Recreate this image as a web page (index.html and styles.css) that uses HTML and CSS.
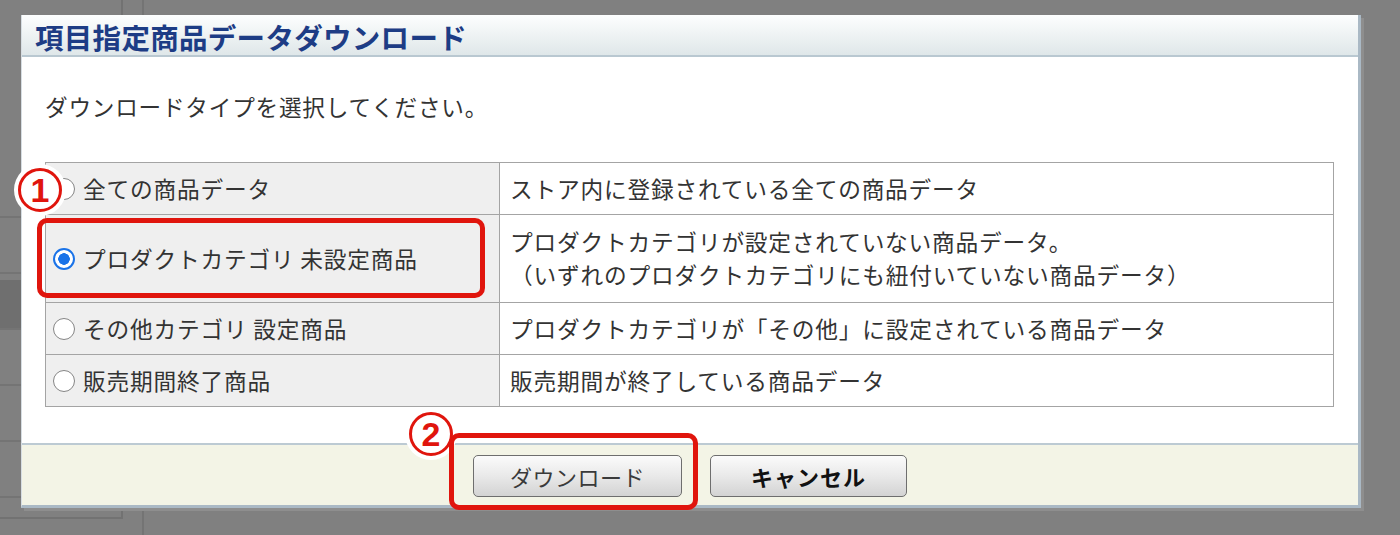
FILE: index.html
```html
<!DOCTYPE html>
<html lang="ja">

<head>
    <meta charset="UTF-8">
    <title>項目指定商品データダウンロード</title>
    <link rel="stylesheet" href="styles.css">
</head>

<body>

    <!-- page behind the modal -->
    <div class="backdrop">
        <div class="side">
            <div class="side-row"></div>
            <div class="side-row"></div>
            <div class="side-row dark"></div>
            <div class="side-row"></div>
            <div class="side-row"></div>
            <div class="side-row"></div>
        </div>
        <div class="side-gap"></div>
    </div>

    <div class="dialog">
        <div class="dialog-head">
            <h2>項目指定商品データダウンロード</h2>
        </div>

        <div class="dialog-body">
            <p class="lead">ダウンロードタイプを選択してください。</p>

            <table class="type-table">
                <tr>
                    <th><label><input type="radio" name="dlType"> 全ての商品データ</label></th>
                    <td>ストア内に登録されている全ての商品データ</td>
                </tr>
                <tr>
                    <th><label><input type="radio" name="dlType" checked> プロダクトカテゴリ 未設定商品</label></th>
                    <td>プロダクトカテゴリが設定されていない商品データ。<br>（いずれのプロダクトカテゴリにも紐付いていない商品データ）</td>
                </tr>
                <tr>
                    <th><label><input type="radio" name="dlType"> その他カテゴリ 設定商品</label></th>
                    <td>プロダクトカテゴリが「その他」に設定されている商品データ</td>
                </tr>
                <tr>
                    <th><label><input type="radio" name="dlType"> 販売期間終了商品</label></th>
                    <td>販売期間が終了している商品データ</td>
                </tr>
            </table>
        </div>

        <div class="dialog-foot">
            <button class="btn btn-download">ダウンロード</button>
            <button class="btn btn-cancel">キャンセル</button>
        </div>
    </div>

    <!-- red annotations drawn over the screenshot -->
    <span class="mark-num num-1">1</span>
    <span class="mark-box box-1"></span>
    <span class="mark-num num-2">2</span>
    <span class="mark-box box-2"></span>

</body>

</html>
```

FILE: styles.css
```css
body {
    margin: 0;
    background: #808080;
    font-family: "Noto Sans CJK JP", "Noto Sans", sans-serif;
    color: #333;
    width: 1400px;
    height: 535px;
    overflow: hidden;
    position: relative;
}

/* Backdrop */
.backdrop {
    display: flex;
    height: 535px;
}

.side {
    width: 123px;
    padding-top: 168px;
    box-sizing: border-box;
    border-right: 2px solid #727272;
    height: 519px;
    border-bottom: 2px solid #727272;
}

.side-row {
    height: 50px;
    border-bottom: 2px solid #747474;
    box-sizing: border-box;
    margin-bottom: 6px;
}

.side-row.dark {
    background: #6f6f6f;
}

.side-gap {
    width: 19px;
    border-right: 2px solid #747474;
}

/* Dialog */
.dialog {
    position: absolute;
    left: 21px;
    top: 15px;
    width: 1336px;
    background: white;
    border-left: 1px solid #d6dde2;
    border-right: 3px solid #aab9c5;
    border-bottom: 3px solid #aab9c5;
    box-shadow: 3px 3px 0 #8e8e8e;
}

.dialog-head {
    height: 40px;
    background: linear-gradient(#fdfefe, #dfe7e9);
    border-bottom: 2px solid #b9c8d1;
    padding-left: 13px;
}

.dialog-head h2 {
    margin: 0;
    font-size: 28.5px;
    line-height: 44px;
    font-weight: 700;
    color: #1d3c85;
    letter-spacing: 0.3px;
}

.dialog-body {
    padding: 33px 24px 36px 23px;
}

.lead {
    margin: 0 0 38px;
    font-size: 22.6px;
    line-height: 34px;
    letter-spacing: 0.8px;
}

.type-table {
    width: 100%;
    border-collapse: collapse;
    font-size: 22.7px;
    line-height: 33px;
    letter-spacing: 0.8px;
}

.type-table th,
.type-table td {
    border: 1px solid #a4a4a4;
    padding: 9px 10px;
    text-align: left;
    vertical-align: middle;
    font-weight: 400;
}

.type-table th {
    width: 436px;
    background: #efefef;
    padding-left: 7px;
    white-space: nowrap;
}

.type-table tr:nth-child(2) td {
    padding-top: 10px;
    padding-bottom: 11px;
}

.type-table label {
    display: flex;
    align-items: center;
}

.type-table input[type="radio"] {
    appearance: none;
    width: 22px;
    height: 22px;
    margin: 0 8px 0 0;
    border: 1.5px solid #858585;
    border-radius: 50%;
    background: white;
    box-sizing: border-box;
    flex: none;
}

.type-table input[type="radio"]:checked {
    border: 2px solid #1a73e8;
    background: radial-gradient(circle, #1a73e8 0 5.5px, white 6px);
}

/* Footer */
.dialog-foot {
    background: #f3f4e6;
    border-top: 2px solid #bccad3;
    height: 60px;
    display: flex;
    justify-content: center;
    align-items: center;
    gap: 28px;
}

.btn {
    height: 42px;
    border: 1px solid #6e6e6e;
    border-radius: 5px;
    background: linear-gradient(#fbfbfb, #e9e9e9 50%, #d3d3d3);
    font-family: inherit;
    font-size: 22px;
    padding: 0;
    cursor: pointer;
    margin-top: 2px;
}

.btn-download {
    width: 209px;
    color: #3a3a3a;
    letter-spacing: 0.5px;
}

.btn-cancel {
    width: 197px;
    color: #111;
    font-weight: 700;
    letter-spacing: 1px;
}

/* Annotations */
.mark-num {
    position: absolute;
    width: 38px;
    height: 38px;
    border: 3px solid #e0150d;
    border-radius: 50%;
    background: white;
    box-shadow: 0 0 0 4px white;
    color: #e0150d;
    font-family: "Liberation Sans", sans-serif;
    font-weight: 700;
    font-size: 34px;
    line-height: 38px;
    text-align: center;
    box-sizing: content-box;
}

.num-1 {
    left: 18px;
    top: 168px;
}

.num-2 {
    left: 409px;
    top: 412px;
}

.mark-box {
    position: absolute;
    border: 5px solid #e0150d;
    border-radius: 10px;
    box-sizing: border-box;
}

.box-1 {
    left: 37px;
    top: 218px;
    width: 448px;
    height: 80px;
}

.box-2 {
    left: 449px;
    top: 433px;
    width: 249px;
    height: 77px;
}
```
